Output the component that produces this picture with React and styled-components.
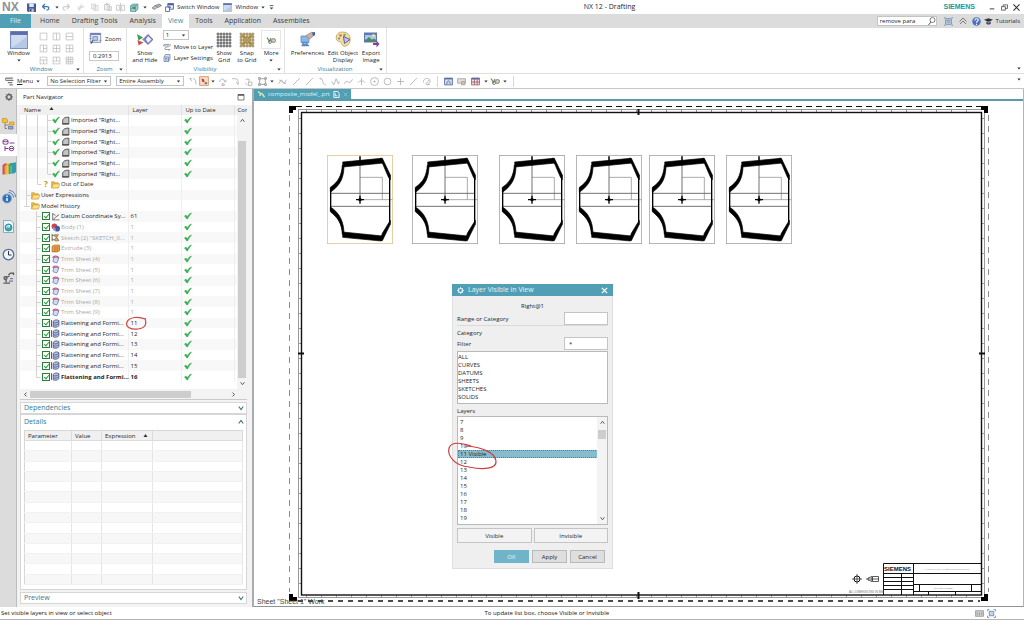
import styled, { createGlobalStyle } from "styled-components";

const GlobalStyle = createGlobalStyle`
  * {
    box-sizing: border-box;
  }
  body {
    margin: 0;
    background: #fff;
    font-family: "Open Sans", "Noto Sans", sans-serif;
    font-size: 6px;
    line-height: 8px;
    color: #262626;
  }
  button, input, select {
    font: inherit;
    color: inherit;
    margin: 0;
    padding: 0;
  }
  button {
    border: 0;
    background: transparent;
  }
  svg {
    display: block;
    flex: none;
  }
`;

const Page = styled.div`
  height: 100vh;
  display: flex;
  flex-direction: column;
  overflow: hidden;
`;

/* ---------- title bar ---------- */

const TitleBar = styled.header`
  height: 14px;
  display: grid;
  grid-template-columns: 57% auto 1fr;
  align-items: center;
`;

const QuickAccess = styled.div`
  display: flex;
  align-items: center;
`;

const Logo = styled.b`
  width: 25px;
  padding-left: 2px;
  font-family: "Liberation Sans", sans-serif;
  font-size: 12px;
  color: #8b9297;
`;

const Title = styled.span`
  font-size: 7px;
`;

const Slot = styled.button`
  width: ${(p) => p.$w || 13}px;
  display: flex;
  align-items: center;
  justify-content: center;
`;

const TextButton = styled.button`
  height: ${(p) => (p.$tall ? "17px" : "auto")};
  display: flex;
  align-items: center;
  gap: 3px;
  margin-right: ${(p) => p.$after || 0}px;
  white-space: nowrap;
`;

const WindowControls = styled.div`
  display: flex;
  align-items: center;
  justify-content: flex-end;
  padding-right: 2px;
`;

const Brand = styled.b`
  margin-right: 10px;
  font-family: "Liberation Sans", sans-serif;
  font-size: 7px;
  color: #159a96;
`;

/* ---------- ribbon tabs ---------- */

const TabBar = styled.nav`
  height: 14px;
  display: flex;
  background: #dcdcdc;
`;

const Tab = styled.button`
  padding: 0 6px;
  background: ${(p) => (p.$active ? "#fff" : "transparent")};
  color: ${(p) => (p.$active ? "#3c8ea5" : "#3a3a3a")};
  font-size: 7px;
`;

const FileTab = styled.button`
  width: 31px;
  margin-right: 3px;
  background: #519fb5;
  color: #d9f1f7;
  font-size: 7px;
`;

const TabTools = styled.div`
  margin-left: auto;
  padding-right: 4px;
  display: flex;
  align-items: center;
`;

const SearchBox = styled.label`
  width: 60px;
  height: 10px;
  margin-right: 5px;
  padding-left: 2px;
  display: flex;
  align-items: center;
  background: #fff;
  border: 1px solid #c4c4c4;

  input {
    flex: 1;
    min-width: 0;
    height: 8px;
    border: 0;
    outline: 0;
  }
`;

/* ---------- ribbon ---------- */

const Ribbon = styled.section`
  height: 46px;
  display: flex;
  border-bottom: 1px solid #dedede;
`;

const Group = styled.div`
  width: ${(p) => p.$w}px;
  display: flex;
  flex-direction: column;
  border-right: 1px solid #e2e2e2;
`;

const GroupBody = styled.div`
  height: 37px;
  display: flex;
  padding: 2px 0 0 ${(p) => p.$left || 0}px;
`;

const GroupLabel = styled.div`
  height: 8px;
  padding: 0 3px 0 6px;
  display: flex;
  align-items: center;
  color: #367d96;

  span {
    flex: 1;
    text-align: center;
  }
`;

const BigButton = styled.button`
  width: ${(p) => p.$w}px;
  display: flex;
  flex-direction: column;
  align-items: center;
  line-height: 7px;
  white-space: nowrap;

  > i {
    height: 19px;
    margin-bottom: 1px;
    display: flex;
    align-items: center;
    font-style: normal;
  }
  > svg {
    margin-top: 2px;
  }
`;

const MoreIcon = styled.i`
  width: 20px;
  justify-content: center;
  border: 1px solid #e6e6e6;
`;

const LayoutGrid = styled.div`
  height: 36px;
  display: grid;
  grid-template-columns: repeat(3, 13px);
  align-items: center;
  justify-items: center;
`;

const Column = styled.div`
  width: ${(p) => p.$w}px;
  display: flex;
  flex-direction: column;
  align-items: flex-start;
  gap: ${(p) => p.$gap}px;
`;

const ZoomInput = styled.input`
  width: 30px;
  height: 10px;
  padding: 0 3px;
  border: 1px solid #c9c9c9;
  outline: 0;
`;

const SelectBox = styled.div`
  width: ${(p) => p.$w}px;
  height: 10px;
  position: relative;
  background: #fff;
  border: 1px solid #c4c4c4;

  select {
    width: 100%;
    height: 8px;
    padding-left: 2px;
    display: block;
    appearance: none;
    border: 0;
    outline: 0;
    background: transparent;
    line-height: 8px;
  }
  svg {
    position: absolute;
    right: 2px;
    top: 3px;
    pointer-events: none;
  }
`;

const End = styled.div`
  margin-left: auto;
  padding: 0 3px 3px 0;
  display: flex;
  align-items: flex-end;
`;

const ToolStrip = styled.div`
  height: 15px;
  padding-left: 5px;
  display: flex;
  align-items: center;
  border-bottom: 1px solid #c6c6c6;
`;

const Divider = styled.span`
  width: 1px;
  height: 11px;
  margin: 0 4px;
  background: #d8d8d8;
`;

/* ---------- body ---------- */

const Body = styled.div`
  flex: 1;
  min-height: 0;
  display: flex;
`;

const Rail = styled.nav`
  width: 17px;
  background: #dcdcdc;
  border-right: 1px solid #bdbdbd;
`;

const RailButton = styled.button`
  width: 17px;
  height: ${(p) => p.$h}px;
  padding-bottom: ${(p) => p.$foot || 0}px;
  display: flex;
  align-items: center;
  justify-content: center;
  background: ${(p) => (p.$active ? "#fff" : "transparent")};
`;

const Navigator = styled.aside`
  width: 237px;
  display: flex;
  flex-direction: column;
  background: #f3f3f3;
  border-right: 2px solid #a9adaf;
`;

const NavTitle = styled.h2`
  height: 16px;
  margin: 0;
  padding: 0 7px 0 6px;
  display: flex;
  align-items: center;
  justify-content: space-between;
  background: #fff;
  font-size: 6px;
  font-weight: 400;
`;

const TreeArea = styled.div`
  position: relative;
  height: 284px;
  margin: 0 5px 0 3px;
  overflow: hidden;
  background: #fff;
`;

const Tree = styled.table`
  width: 100%;
  height: 277px;
  table-layout: fixed;
  border-collapse: collapse;

  th {
    height: 10px;
    padding: 0 0 0 4px;
    text-align: left;
    font-weight: 400;
    background: #f0f0f0;
    border-right: 1px solid #e2e2e2;
    overflow: hidden;
    white-space: nowrap;
  }
  th:last-child {
    padding-left: 3px;
    border: 0;
  }
  th svg {
    display: inline-block;
    margin: 0 0 2px 7px;
  }
  td {
    padding: 0 2px;
    border-right: 1px solid #efefef;
  }
  tbody tr:nth-child(even) {
    background: #f8f8f8;
  }
`;

const NodeCell = styled.div`
  height: 10px;
  padding-left: ${(p) => p.$indent}px;
  display: flex;
  align-items: center;
  gap: 1px;
  white-space: nowrap;
  color: ${(p) => (p.$dim ? "#a9a9a9" : "#262626")};
  font-weight: ${(p) => (p.$bold ? 700 : 400)};
`;

const LayerCell = styled.td`
  color: ${(p) => (p.$dim ? "#a9a9a9" : "#262626")};
  font-weight: ${(p) => (p.$bold ? 700 : 400)};
`;

const Question = styled.b`
  width: 8px;
  padding-left: 2px;
  font-size: 8px;
  color: #b09a28;
`;

const TickBox = styled.input`
  appearance: none;
  width: 8px;
  height: 8px;
  flex: none;
  position: relative;
  background: #fff;
  border: 1px solid #2f7d3d;

  &:checked::after {
    content: "";
    position: absolute;
    left: 2px;
    top: 0;
    width: 2px;
    height: 4px;
    border: solid #22a63a;
    border-width: 0 1px 1px 0;
    transform: rotate(40deg);
  }
`;

const TreeLines = styled.svg`
  position: absolute;
  left: 0;
  top: 10px;
  pointer-events: none;
`;

const VScroll = styled.div`
  position: absolute;
  right: 0;
  top: ${(p) => p.$top || 0}px;
  bottom: 0;
  width: 10px;
  padding: 3px 1px;
  display: flex;
  flex-direction: column;
  align-items: center;
  background: #f3f3f3;

  &::after {
    content: "";
    order: 1;
    width: 8px;
    height: ${(p) => p.$thumb}px;
    margin-top: ${(p) => p.$gap}px;
    background: #cdcdcd;
  }
  svg:last-of-type {
    order: 2;
    margin-top: auto;
  }
`;

const HScroll = styled.div`
  height: 11px;
  margin: 0 5px 0 3px;
  padding: 0 11px 0 3px;
  display: flex;
  align-items: center;
  gap: 2px;
  border-bottom: 1px solid #c9c9c9;

  i {
    width: 161px;
    height: 7px;
    margin-right: auto;
    background: #cdcdcd;
  }
`;

const Section = styled.section`
  margin: ${(p) => (p.$grow ? "0" : "2px")} 5px ${(p) => (p.$last ? "3px" : "0")} 3px;
  background: #fff;
  border: 1px solid #d6d6d6;
  ${(p) => p.$grow && "flex: 1; min-height: 0; display: flex; flex-direction: column;"}
`;

const SectionTitle = styled.button`
  width: 100%;
  height: ${(p) => p.$h || 10}px;
  padding: 0 2px 0 3px;
  display: flex;
  align-items: center;
  justify-content: space-between;
  color: #33788f;
  font-size: 7px;
`;

const Details = styled.table`
  flex: 1;
  margin: 1px 3px 4px;
  table-layout: fixed;
  border-collapse: collapse;
  border: 1px solid #d6d6d6;

  th {
    height: 10px;
    padding: 0 3px;
    text-align: left;
    font-weight: 400;
    background: #f0f0f0;
    border-right: 1px solid #dcdcdc;
    border-bottom: 1px solid #dcdcdc;
  }
  th svg {
    display: inline-block;
    margin: 0 0 1px 6px;
  }
  td {
    height: 10px;
    padding: 0;
    border-right: 1px solid #e6e6e6;
    border-bottom: 1px solid #f1f1f1;
  }
  tbody tr:nth-child(even) {
    background: #f7f7f7;
  }
`;

/* ---------- drawing ---------- */

const Workspace = styled.main`
  flex: 1;
  min-width: 0;
  position: relative;
  display: flex;
  flex-direction: column;
  border-right: 1px solid #b5b5b5;
  border-bottom: 1px solid #8f9496;
`;

const FileTabs = styled.div`
  height: 12px;
  display: flex;
  border-bottom: 2px solid #5b9aa9;
`;

const OpenFile = styled.button`
  width: 97px;
  padding: 0 3px;
  display: flex;
  align-items: center;
  gap: 3px;
  background: #519fb5;
  color: #dff3f8;
`;

const Sheet = styled.svg`
  flex: 1;
  width: 100%;
  min-height: 0;
`;

/* ---------- dialog ---------- */

const Dialog = styled.form`
  position: absolute;
  left: 198px;
  top: 195px;
  width: 161px;
  padding-bottom: 5px;
  background: #efefef;
  border: 1px solid #dedede;
`;

const DialogTitle = styled.header`
  height: 12px;
  margin: -1px -1px 0;
  padding: 0 5px;
  display: flex;
  align-items: center;
  gap: 4px;
  background: #519fb5;
  color: #e3f5fa;
  font-size: 7px;

  button {
    margin-left: auto;
  }
`;

const DialogBody = styled.div`
  padding: 6px 4px 0;
`;

const Subject = styled.p`
  margin: 0 0 2px;
  text-align: center;
`;

const Field = styled.label`
  height: 13px;
  display: flex;
  align-items: center;
  justify-content: space-between;

  input {
    width: 44px;
    height: 13px;
    padding: 0 4px;
    background: #fff;
    border: 1px solid #c4c4c4;
    outline: 0;
  }
`;

const Caption = styled.p`
  height: ${(p) => (p.$rule ? 12 : 11)}px;
  margin: 0;
  padding-top: 3px;
  border-top: ${(p) => (p.$rule ? "1px solid #dadada" : "0")};
`;

const ListBox = styled.ul`
  position: relative;
  height: ${(p) => p.$h}px;
  margin: 1px 0 0;
  padding: 1px 9px 0 0;
  overflow: hidden;
  list-style: none;
  background: #fff;
  border: 1px solid #b9b9b9;
`;

const Option = styled.li`
  height: 8px;
  padding-left: ${(p) => p.$pad}px;
  background: ${(p) => (p.$selected ? "#86bccb" : "transparent")};
  outline: ${(p) => (p.$selected ? "1px dotted #4f7f8d" : "0")};
  outline-offset: -1px;
`;

const ButtonPair = styled.div`
  margin-top: 3px;
  display: grid;
  grid-template-columns: 1fr 1fr;
  gap: 2px;

  button {
    height: 15px;
    background: #f3f3f3;
    border: 1px solid #c4c4c4;
  }
`;

const Footer = styled.footer`
  margin-top: 7px;
  padding-right: 3px;
  display: flex;
  justify-content: flex-end;
  gap: 3px;
`;

const FooterButton = styled.button`
  width: 35px;
  height: 13px;
  background: ${(p) => (p.$primary ? "#6fb4c8" : "#dedede")};
  border: 1px solid ${(p) => (p.$primary ? "#6fb4c8" : "#b9b9b9")};
  color: ${(p) => (p.$primary ? "#e3f5fa" : "#262626")};
`;

const Mark = styled.svg`
  position: absolute;
  left: ${(p) => p.$x}px;
  top: ${(p) => p.$y}px;
  overflow: visible;
  pointer-events: none;
`;

const StatusBar = styled.footer`
  height: 13px;
  padding: 0 28px 0 1px;
  display: grid;
  grid-template-columns: 5fr auto 4fr;
  align-items: center;
  border-bottom: 1px solid #b5b5b5;
  color: #111;

  div {
    display: flex;
    justify-content: flex-end;
    gap: 3px;
  }
`;

/* ---------- icons ---------- */

const Icon = ({ size = 9, w, h, box = "0 0 16 16", children, ...rest }) => (
  <svg width={w || size} height={h || size} viewBox={box} fill="none" stroke="#555" strokeWidth="1.5" aria-hidden="true" {...rest}>
    {children}
  </svg>
);

const Caret = ({ up, big }) => (
  <svg width={big ? 5 : 4} height="3" viewBox="0 0 4 3" aria-hidden="true">
    <path d={up ? "M0 3h4L2 0z" : "M0.3 0.5h3.4L2 2.6z"} fill="#333" />
  </svg>
);

const CHEVRONS = {
  down: "M2 4l6 8 6-8",
  up: "M2 12l6-8 6 8",
  left: "M11 2L5 8l6 6",
  right: "M5 2l6 6-6 6",
};

const Chevron = ({ dir = "down", color = "#3f6f80", size = 6 }) => (
  <Icon size={size} stroke={color} strokeWidth="3">
    <path d={CHEVRONS[dir]} />
  </Icon>
);

const SaveIcon = () => (
  <Icon stroke="none">
    <path d="M0 1h16v15H2L0 14z" fill="#4a5a94" />
    <path d="M4 1h8v6H4z" fill="#e6ecfa" />
    <path d="M4 10h8v6H4z" fill="#b9c3df" />
    <path d="M5 11h3v4H5z" fill="#38406b" />
  </Icon>
);

const UndoIcon = () => (
  <Icon size={8} stroke="#3f74b8" strokeWidth="2.5">
    <path d="M2 7h8c5 0 5 7-1 7M6 2L1 7l5 5" />
  </Icon>
);

const RedoIcon = () => (
  <Icon size={8} stroke="#cfcfcf" strokeWidth="2.5">
    <path d="M14 7H6c-5 0-5 7 1 7M10 2l5 5-5 5" />
  </Icon>
);

const CutIcon = () => (
  <Icon size={8} stroke="#c9c9c9">
    <path d="M1 8h14M9 2L6 12M4 10a2 2 0 100 4 2 2 0 000-4zM12 5l-4 4" />
  </Icon>
);

const CopyIcon = () => (
  <Icon size={8} stroke="#cfcfcf">
    <path d="M1 2h8v10H1zM6 5h8v10H6z" fill="#f3f3f3" />
  </Icon>
);

const PasteIcon = () => (
  <Icon size={8} stroke="#c4c4c4">
    <path d="M1 3h10v11H1zM4 1h4v3H4zM8 7h7v8H8z" fill="#f0f0f0" />
  </Icon>
);

const MirrorIcon = () => (
  <Icon size={9} stroke="#c4c4c4">
    <path d="M8 0v16M1 4h5v9H1zM10 4h5v9h-5z" />
  </Icon>
);

const RefreshIcon = () => (
  <Icon size={9} stroke="#4e9a86">
    <path d="M1 5l4-3h9v9l-4 4H1z" fill="#a9d3cd" />
    <path d="M1 5h9l4-3M10 5v10" />
    <path d="M3 11c0-4 5-4 5-1M8 7v3H5" stroke="#2b6b8f" />
  </Icon>
);

const EraserIcon = () => (
  <Icon w={11} h={8} box="0 0 22 16" stroke="#777">
    <path d="M2 10l6-5 5 3-5 5z" fill="#d8b9b9" />
    <path d="M9 5l7-3 5 3-7 4z" fill="#a8b3d8" />
  </Icon>
);

const SwitchIcon = () => (
  <Icon stroke="#4a5f9c">
    <path d="M5 1h10v10H5z" fill="#e4ecfa" />
    <path d="M5 2.5h10" strokeWidth="3" />
    <path d="M1 7h7v8H1z" fill="#fff" />
    <path d="M10 9c0-4-4-4-4 0" />
  </Icon>
);

const WindowIcon = ({ size = 9 }) => (
  <Icon size={size} stroke="#7c90c0" strokeWidth="1">
    <path d="M.5.5h15v15H.5z" fill="#cfdcf0" />
    <path d="M1 15L15 5v10z" fill="#b5c9e6" stroke="none" />
    <path d="M.5 2h15" stroke="#5b6dab" strokeWidth="3" />
  </Icon>
);

const LAYOUTS = [
  "", "M8 2v12", "M2 8h12",
  "M8 2v12M8 8h6", "M8 2v12M2 8h12", "M8 2v12M2 8h12",
  "M2 7h12M8 7v7", "M2 9h6M8 2v7h6", "M2 6h12M2 10h12M6 2v12M10 2v12",
];

const LayoutIcon = ({ lines }) => (
  <Icon size={9} stroke="#b9b9b9" strokeWidth="1.3">
    <path d={"M2 2h12v12H2z" + lines} />
  </Icon>
);

const ZoomIcon = () => (
  <Icon size={13} box="0 0 20 20" stroke="#6f7fae" strokeWidth="1.2">
    <path d="M2 2h16v14H2z" fill="#e5ebf7" />
    <path d="M2 3h16" strokeWidth="3" />
    <path d="M6 7h7v6H6z" fill="#b9caea" />
    <path d="M6 13l-3 5" stroke="#4c5a8a" strokeWidth="2" />
    <path d="M1 6h3M1 10h3M16 13h3" />
  </Icon>
);

const ShowHideIcon = () => (
  <Icon w={17} h={13} box="0 0 34 26" stroke="none">
    <path d="M2 2l12 7-9 6z" fill="#3fa24c" />
    <path d="M3 14l12 5-10 6z" fill="#cf5252" />
    <path d="M12 13l10-9v18z" fill="#8d93c9" />
    <path d="M24 4l9 9-9 9-6-9z" fill="#eef0fb" stroke="#6d74b5" strokeWidth="2.5" />
  </Icon>
);

const MoveLayerIcon = () => (
  <Icon size={8} stroke="#7b8790">
    <path d="M2 3h10l-3 3H1zM4 13h10l-3 3M14 2c2 4-1 5-6 6-4 1-5 3-4 5" />
  </Icon>
);

const LayerSettingsIcon = () => (
  <Icon size={8} stroke="#6a7fa8">
    <path d="M2 6l3-5h9v9l-3 5H2z" fill="#dbe6f4" />
    <path d="M2 6h9v9M4 9h5M4 12h5" />
  </Icon>
);

const GridIcon = ({ snap }) => (
  <Icon size={16} box="0 0 32 32" stroke={snap ? "#8a7c5a" : "#444"} strokeWidth="1.8">
    {snap && <path d="M3 3h26v26H3z" fill="#ecd98f" stroke="none" />}
    <path d="M4 1v30M10 1v30M16 1v30M22 1v30M28 1v30M1 4h30M1 10h30M1 16h30M1 22h30M1 28h30" />
    {snap && <path d="M6 6l8 8M26 6l-8 8M6 26l8-8M26 26l-8-8" stroke="#a8803a" strokeWidth="2.5" />}
  </Icon>
);

const GlassesIcon = () => (
  <Icon w={10} h={8} box="0 0 20 16" stroke="#667">
    <path d="M2 3l5 8 3-7" stroke="#6a8f53" strokeWidth="2.5" />
    <circle cx="8" cy="12" r="3" />
    <circle cx="15" cy="9" r="4" fill="#d8d2b5" />
  </Icon>
);

const PreferencesIcon = () => (
  <Icon w={17} h={17} box="0 0 34 34" stroke="#5a87bd">
    <path d="M4 10h16v13H4z" fill="#8db7e2" />
    <path d="M8 23h8v4H8zM5 29h15" strokeWidth="3" />
    <path d="M14 9l12-7 6 5-11 9z" fill="#c9b3a6" stroke="#a58474" />
    <path d="M26 3l6-1v6l-4 2z" fill="#4c5aa5" stroke="none" />
  </Icon>
);

const PaletteIcon = () => (
  <Icon w={17} h={17} box="0 0 34 34" stroke="#b99b4c">
    <path d="M15 2C4 2 1 11 3 17c2 5 7 3 9 6 2 5 4 9 10 7 8-2 9-12 8-18C28 5 22 2 15 2z" fill="#f0dfa0" />
    <circle cx="11" cy="9" r="2.5" fill="#d86b58" stroke="none" />
    <circle cx="19" cy="8" r="2.5" fill="#68a86b" stroke="none" />
    <circle cx="8" cy="15" r="2" fill="#5d7fc6" stroke="none" />
    <path d="M17 11l13 6-11 8z" fill="#c8c6ee" stroke="#5f55ad" strokeWidth="2" />
  </Icon>
);

const ExportIcon = () => (
  <Icon w={17} h={17} box="0 0 34 34" stroke="none">
    <path d="M2 3h26v20H2z" fill="#5f77b3" />
    <path d="M4 8h22v9H4z" fill="#a4c7ec" />
    <path d="M4 20l8-8 6 6 4-3 4 4v2H4z" fill="#4d8a57" />
    <circle cx="21" cy="9" r="3" fill="#f0e288" />
    <path d="M20 24h7v-5l6 7-6 7v-5h-7z" fill="#8a3f9c" />
  </Icon>
);

const MenuIcon = () => (
  <Icon size={9} stroke="#777">
    <path d="M1 2h13M3 6h12M5 10h8M8 14h6" strokeWidth="2" />
    <path d="M1 2v4h3" />
  </Icon>
);

const SNAPS = {
  hook: "M3 3l4 4M9 3c5 0 5 5 5 10M3 3h4",
  arc: "M2 9c3-7 9-7 11 0M13 9l-3-3M13 9l2-4M7 12h4v3H7z",
  sweep: "M2 3h6c4 0 5 4 5 10M9 9l4 5",
  pair: "M3 4h6v5M8 9h6v6H8zM2 10l5 5",
  chain: "M1 12l5-7 5 7 4-7M2 5l12 7",
  line: "M2 14L14 2",
  spline: "M3 2c8 0 3 12 11 12M3 2l3 3",
  wave: "M1 8l4 6 4-11 4 9 2-4",
  curve: "M1 12C5 0 9 18 15 4",
  perp: "M8 2v12M2 10c2-4 10-4 12 0",
  target: "M8 1a7 7 0 100 14A7 7 0 008 1zM8 6v4M6 8h4",
  circle: "M8 2a6 6 0 100 12A6 6 0 008 2z",
  plus: "M8 2v12M2 8h12",
  slash: "M2 14l9-9M11 5l3-3",
  face: "M3 10C1 4 9 0 13 4s0 9-5 9M6 13l7-8M8 14l6-1",
};

const SnapIcon = ({ name }) => (
  <Icon size={9} stroke="#b3b3b3" strokeWidth="1.6">
    <path d={SNAPS[name]} />
  </Icon>
);

const PointIcon = () => (
  <Icon size={10} stroke="#d9976b">
    <path d="M1 1h14v14H1z" fill="#f7dccb" />
    <path d="M4 4l4 1 1 5-4-1z" fill="#b34a42" stroke="none" />
    <path d="M9 10h4v3H9z" fill="#777" stroke="none" />
  </Icon>
);

const BoxIcon = () => (
  <Icon size={9} stroke="#777" strokeWidth="1.2">
    <path d="M3 3h10v10H3z" />
    <path d="M1 1h3v3H1zM12 1h3v3h-3zM1 12h3v3H1zM12 12h3v3h-3z" fill="#fff" />
  </Icon>
);

const DrawViewIcon = () => (
  <Icon size={9} stroke="#5a6a9c">
    <path d="M1 2h14v12H1z" fill="#cfdcf2" />
    <path d="M1 3h14" strokeWidth="2.5" />
    <path d="M5 13c0-8 6-8 6 0" />
  </Icon>
);

const NoteIcon = () => (
  <Icon size={9} stroke="#a5a5a5">
    <path d="M1 3h14v8H1z" fill="#dedede" />
    <path d="M8 8h6v6H8z" fill="#d4c493" />
  </Icon>
);

const TableIcon = () => (
  <Icon size={9} stroke="#9c5b6c">
    <path d="M1 2h14v12H1z" fill="#f4e4ea" />
    <path d="M1 3h14" stroke="#5c6ba5" strokeWidth="3" />
    <path d="M1 9h14M6 4v10M11 4v10" />
  </Icon>
);

const GearIcon = ({ color = "#555", size = 8 }) => (
  <Icon size={size} stroke={color} strokeWidth="2.6">
    <circle cx="8" cy="8" r="4.6" />
    <path d="M8 0v3M8 13v3M0 8h3M13 8h3M2.4 2.4l2 2M11.6 11.6l2 2M13.6 2.4l-2 2M4.4 11.6l-2 2" strokeWidth="1.8" />
  </Icon>
);

const AssemblyIcon = () => (
  <Icon size={13} box="0 0 26 26" stroke="#7a6f4c">
    <path d="M1 3h8l2 3v5H1zM15 10h9v6h-9z" fill="#f2c230" stroke="#c7962a" />
    <path d="M6 12v11h4M6 16h8" />
    <path d="M13 19h9v5h-9z" fill="#9aa6cf" stroke="#5f6ea5" />
  </Icon>
);

const PartNavIcon = () => (
  <Icon size={13} box="0 0 26 26" stroke="#7d3d86" strokeWidth="2">
    <path d="M2 3c2-2 8-2 10 0v6c-2 2-8 2-10 0zM2 4c2 2 8 2 10 0M15 8h10M6 14v10M6 19h7" />
    <circle cx="19" cy="19" r="4.5" />
    <path d="M16 19h6" />
  </Icon>
);

const BooksIcon = () => (
  <Icon size={14} box="0 0 28 28" stroke="none">
    <path d="M1 9l4-4h5v19l-4 3H1z" fill="#d8503c" />
    <path d="M7 9l4-4h5v19l-4 3H7z" fill="#e8b836" />
    <path d="M13 8l4-4h5v19l-4 3h-5z" fill="#3fa556" />
    <path d="M19 7l4-4h5v19l-4 3h-5z" fill="#2f9bb5" />
    <path d="M6 10v17M12 10v17M18 9v17" stroke="#fff" strokeWidth="0.8" />
  </Icon>
);

const InfoIcon = () => (
  <Icon size={14} box="0 0 28 28" stroke="#5878b8" strokeWidth="2">
    <circle cx="10" cy="17" r="9" fill="#2f6fb5" stroke="#7fa6d6" />
    <path d="M10 11v3M10 16v6" stroke="#fff" strokeWidth="3" />
    <path d="M13 5c6 0 10 5 10 10M14 1c8 0 13 6 13 13" />
  </Icon>
);

const GlobePageIcon = () => (
  <Icon size={13} box="0 0 26 26" stroke="#5f9fae">
    <path d="M3 1h15l5 5v19H3z" fill="#eaf6f8" />
    <circle cx="13" cy="15" r="7" fill="#3fa7b0" stroke="#2c7f9b" />
    <path d="M9 15c0-5 5-5 6-2M15 10v4h-4" stroke="#fff" strokeWidth="2" />
  </Icon>
);

const ClockIcon = () => (
  <Icon size={13} box="0 0 26 26" stroke="#56698f" strokeWidth="2.5">
    <circle cx="13" cy="13" r="10.5" fill="#eef4fb" />
    <path d="M13 6v8h6" stroke="#333" strokeWidth="2" />
  </Icon>
);

const RobotIcon = () => (
  <Icon size={13} box="0 0 26 26" stroke="#555" strokeWidth="2.5">
    <path d="M3 24h13M9 22l-3-8 9-4M13 8l4-4h6v4" />
    <circle cx="7" cy="14" r="3" fill="#d6a86c" />
    <path d="M16 15h6M14 20h8" stroke="#6f7fae" />
  </Icon>
);

const GreenCheck = () => (
  <Icon size={8} stroke="#2eae4a" strokeWidth="1">
    <path d="M1 8l3-2 2.5 4C8.5 6 11 3 15 2c-3 4-5.5 7-8 12H5.5C4.5 12 3 10 1 8z" fill="#2eae4a" />
  </Icon>
);

const Folder = () => (
  <Icon size={9} stroke="#c9962c" strokeWidth="1">
    <path d="M1 3h5l1 2h6v9H1z" fill="#e8b848" />
    <path d="M4 7h12l-3 7H1z" fill="#fbe08a" />
  </Icon>
);

const NODE_ICONS = {
  sheet: (
    <Icon size={9} stroke="#444">
      <path d="M3 14V7c2-4 5-5 11-5v12z" fill="#c3c3c3" />
      <path d="M2 14h12" strokeWidth="2" />
    </Icon>
  ),
  folder: <Folder />,
  datum: (
    <Icon stroke="#666">
      <path d="M3 2v12h12M3 14L13 5M3 3l5 3" />
      <path d="M10 8l4-3" stroke="#9b6b5b" />
    </Icon>
  ),
  body: (
    <Icon stroke="none">
      <circle cx="6" cy="6" r="5" fill="#cc4848" />
      <circle cx="11" cy="10" r="5" fill="#4458a8" />
      <path d="M3 7l5 2 1 6-5-2z" fill="#8d9ad2" />
    </Icon>
  ),
  sketch: (
    <Icon stroke="#555">
      <path d="M2 2v12M2 4h5M2 12h5M13 2l-3 6 4 6" />
      <path d="M7 3h4v4H7zM7 10h5v4H7z" fill="#e0c36b" stroke="#9c8438" />
    </Icon>
  ),
  extrude: (
    <Icon stroke="#b5702c">
      <path d="M2 4l4-2h9v10l-4 2H2z" fill="#eba04b" />
      <path d="M7 4v9M11 4v9" />
    </Icon>
  ),
  trim: (
    <Icon stroke="#6670b5">
      <path d="M5 5c3-2 6 0 9 0-2 3-1 6-4 9-3-1-5-1-7-3 2-2 1-4 2-6z" fill="#d6d9f2" />
      <path d="M3 5c2-4 8-4 11 0" stroke="#c85f6f" strokeWidth="2.5" />
    </Icon>
  ),
  flat: (
    <Icon stroke="#4d5a8c">
      <path d="M4 4c3-3 7-3 10-1v9c-3 3-7 3-10 2z" fill="#b7c2e2" />
      <path d="M4 6c3 2 7 1 10-2M4 10c3 2 7 1 10-2" />
      <path d="M1 2v12" stroke="#333" />
    </Icon>
  ),
};

/* ---------- data ---------- */

const range = (from, to) => Array.from({ length: to - from + 1 }, (_, i) => from + i);

const NODES = [
  ...range(1, 6).map(() => ({ name: 'Imported "Right...', icon: "sheet", kind: "import", ok: true })),
  { name: "Out of Date", icon: "folder", kind: "stale" },
  { name: "User Expressions", icon: "folder", kind: "root" },
  { name: "Model History", icon: "folder", kind: "root" },
  { name: "Datum Coordinate Sy...", icon: "datum", layer: 61, ok: true },
  { name: "Body (1)", icon: "body", layer: 1, dim: true, ok: true },
  { name: 'Sketch (2) "SKETCH_0...', icon: "sketch", layer: 1, dim: true, ok: true },
  { name: "Extrude (3)", icon: "extrude", layer: 1, dim: true, ok: true },
  ...range(4, 9).map((n) => ({ name: `Trim Sheet (${n})`, icon: "trim", layer: 1, dim: true, ok: true })),
  ...range(11, 16).map((n) => ({ name: "Flattening and Formi...", icon: "flat", layer: n, bold: n === 16, ok: true })),
];

const INDENT = { import: 30, stale: 20, root: 9, feature: 20 };

const CATEGORIES = ["ALL", "CURVES", "DATUMS", "SHEETS", "SKETCHES", "SOLIDS"];

const VIEWS = [327, 412, 499, 576, 649, 726];

/* ---------- parts ---------- */

const Select = ({ label, width, value }) => (
  <SelectBox $w={width}>
    <select aria-label={label} defaultValue={value}>
      <option>{value}</option>
    </select>
    <Caret big />
  </SelectBox>
);

function TopBar() {
  return (
    <TitleBar>
      <QuickAccess>
        <Logo>NX</Logo>
        <Slot aria-label="Save"><SaveIcon /></Slot>
        <Slot aria-label="Undo" $w={16}><UndoIcon /></Slot>
        <Slot aria-label="Undo list" $w={5}><Caret /></Slot>
        <Slot aria-label="Redo"><RedoIcon /></Slot>
        <Slot aria-label="Cut" $w={18}><CutIcon /></Slot>
        <Slot aria-label="Copy" $w={10}><CopyIcon /></Slot>
        <Slot aria-label="Paste" $w={15}><PasteIcon /></Slot>
        <Slot aria-label="Mirror" $w={10}><MirrorIcon /></Slot>
        <Slot aria-label="Refresh" $w={18}><RefreshIcon /></Slot>
        <Slot aria-label="Refresh list" $w={4}><Caret /></Slot>
        <Slot aria-label="Erase" $w={18}><EraserIcon /></Slot>
        <TextButton $after={4}><SwitchIcon />Switch Window</TextButton>
        <TextButton $after={4}><WindowIcon />Window<Caret /></TextButton>
        <Slot aria-label="Customize" $w={5}>
          <Icon size={5} box="0 0 8 8"><path d="M1 1h6" /><path d="M1 4h6L4 7z" fill="#444" stroke="none" /></Icon>
        </Slot>
      </QuickAccess>
      <Title>NX 12 - Drafting</Title>
      <WindowControls>
        <Brand>SIEMENS</Brand>
        <Slot aria-label="Minimize"><Icon size={6}><path d="M2 13h12" strokeWidth="3" /></Icon></Slot>
        <Slot aria-label="Restore"><Icon size={7}><path d="M1 6h9v8H1zM5 6V2h10v8h-5" strokeWidth="2" /></Icon></Slot>
        <Slot aria-label="Close" $w={11}><Icon size={7}><path d="M1 1l14 14M15 1L1 15" strokeWidth="2.5" stroke="#333" /></Icon></Slot>
      </WindowControls>
    </TitleBar>
  );
}

function Tabs() {
  return (
    <TabBar>
      <FileTab>File</FileTab>
      {["Home", "Drafting Tools", "Analysis", "View", "Tools", "Application", "Assemblies"].map((name) => (
        <Tab key={name} $active={name === "View"}>{name}</Tab>
      ))}
      <TabTools>
        <SearchBox>
          <input aria-label="Search commands" defaultValue="remove para" />
          <Icon size={8}><circle cx="9" cy="6" r="5" /><path d="M6 10l-5 6" strokeWidth="2" /></Icon>
        </SearchBox>
        <Slot aria-label="Full screen" $w={14}>
          <Icon size={9} stroke="#6a87a8"><path d="M3 3h10v10H3z" fill="#c5d6e6" /><path d="M0 3V0h3M13 0h3v3M16 13v3h-3M3 16H0v-3M5 6h6M5 9h6" /></Icon>
        </Slot>
        <Slot aria-label="Minimize ribbon" $w={14}><Icon size={8}><path d="M1 9l7-7 7 7M2 14l6-6 6 6" /></Icon></Slot>
        <Slot aria-label="Help" $w={14}>
          <Icon size={9} stroke="none"><circle cx="8" cy="8" r="7.5" fill="#4a70c0" /><path d="M5 6c0-4 7-4 6 0-1 2-3 2-3 4M8 12v2" stroke="#fff" strokeWidth="2" /></Icon>
        </Slot>
        <TextButton>
          <Icon size={9} stroke="none"><path d="M0 5l8-3 8 3-8 4z" fill="#333" /><path d="M4 8v4c3 2 6 2 8 0V8l-4 2z" fill="#444a70" /></Icon>
          Tutorials
        </TextButton>
      </TabTools>
    </TabBar>
  );
}

function RibbonBar() {
  return (
    <Ribbon>
      <Group $w={84}>
        <GroupBody>
          <BigButton $w={37}><i><WindowIcon size={18} /></i>Window<Caret /></BigButton>
          <LayoutGrid>{LAYOUTS.map((lines, i) => <LayoutIcon key={i} lines={lines} />)}</LayoutGrid>
        </GroupBody>
        <GroupLabel><span>Window</span><Caret /></GroupLabel>
      </Group>
      <Group $w={43}>
        <GroupBody $left={5}>
          <Column $gap={4}>
            <TextButton $tall><ZoomIcon />Zoom</TextButton>
            <ZoomInput aria-label="Zoom scale" defaultValue="0.2913" />
          </Column>
        </GroupBody>
        <GroupLabel><span>Zoom</span><Caret /></GroupLabel>
      </Group>
      <Group $w={158}>
        <GroupBody>
          <BigButton $w={36}><i><ShowHideIcon /></i>Show<br />and Hide</BigButton>
          <Column $w={50} $gap={3}>
            <Select label="Work layer" width={26} value="1" />
            <TextButton><MoveLayerIcon />Move to Layer</TextButton>
            <TextButton><LayerSettingsIcon />Layer Settings</TextButton>
          </Column>
          <BigButton $w={23}><i><GridIcon /></i>Show<br />Grid</BigButton>
          <BigButton $w={23}><i><GridIcon snap /></i>Snap<br />to Grid</BigButton>
          <BigButton $w={26}><MoreIcon><GlassesIcon /></MoreIcon>More<Caret /></BigButton>
        </GroupBody>
        <GroupLabel><span>Visibility</span><Caret /></GroupLabel>
      </Group>
      <Group $w={102}>
        <GroupBody $left={4}>
          <BigButton $w={37}><i><PreferencesIcon /></i>Preferences</BigButton>
          <BigButton $w={34}><i><PaletteIcon /></i>Edit Object<br />Display</BigButton>
          <BigButton $w={22}><i><ExportIcon /></i>Export<br />Image</BigButton>
        </GroupBody>
        <GroupLabel><span>Visualization</span><Caret /></GroupLabel>
      </Group>
      <End><Caret /></End>
    </Ribbon>
  );
}

function SelectionBar() {
  return (
    <ToolStrip>
      <TextButton $after={7}><MenuIcon /><span><u>M</u>enu</span><Caret /></TextButton>
      <Select label="Type filter" width={64} value="No Selection Filter" />
      <Slot as="span" $w={5} />
      <Select label="Selection scope" width={68} value="Entire Assembly" />
      <Slot as="span" $w={3} />
      <Slot $w={11} aria-label="Reset"><SnapIcon name="hook" /></Slot>
      <Slot $w={12} aria-label="Point"><PointIcon /></Slot>
      <Slot $w={6} aria-label="Point list"><Caret /></Slot>
      {["arc", "sweep", "pair"].map((n) => <Slot key={n} aria-label={n}><SnapIcon name={n} /></Slot>)}
      <Slot $w={14} aria-label="Box"><BoxIcon /></Slot>
      <Slot $w={6} aria-label="Box list"><Caret /></Slot>
      <Slot $w={15} aria-label="chain"><SnapIcon name="chain" /></Slot>
      {["line", "slash", "spline", "wave", "curve", "perp", "target", "circle", "plus", "slash", "face"].map((n, i) => (
        <Slot key={i} aria-label={n}><SnapIcon name={n} /></Slot>
      ))}
      <Divider />
      <Slot aria-label="View"><DrawViewIcon /></Slot>
      <Slot aria-label="Note"><NoteIcon /></Slot>
      <Slot $w={15} aria-label="Table"><TableIcon /></Slot>
      <Slot $w={5} aria-label="Table list"><Caret /></Slot>
      <Slot aria-label="Display"><GlassesIcon /></Slot>
      <Slot $w={8} aria-label="Display list"><Caret /></Slot>
      <Divider />
      <End><Caret /></End>
    </ToolStrip>
  );
}

function ResourceRail() {
  return (
    <Rail>
      <RailButton $h={23} $foot={8} aria-label="Settings"><GearIcon /></RailButton>
      <RailButton $h={22} aria-label="Assembly Navigator"><AssemblyIcon /></RailButton>
      <RailButton $h={22} $active aria-label="Part Navigator"><PartNavIcon /></RailButton>
      <RailButton $h={24} aria-label="Reuse Library"><BooksIcon /></RailButton>
      <RailButton $h={34} aria-label="Info"><InfoIcon /></RailButton>
      <RailButton $h={24} aria-label="Web Browser"><GlobePageIcon /></RailButton>
      <RailButton $h={32} aria-label="History"><ClockIcon /></RailButton>
      <RailButton $h={14} aria-label="Machine"><RobotIcon /></RailButton>
    </Rail>
  );
}

function TreeRow({ node }) {
  const { name, icon, kind = "feature", layer, dim, bold, ok } = node;
  return (
    <tr>
      <td>
        <NodeCell $indent={INDENT[kind]} $dim={dim} $bold={bold}>
          {kind === "import" && <GreenCheck />}
          {kind === "stale" && <Question>?</Question>}
          {kind === "feature" && <TickBox type="checkbox" defaultChecked aria-label={name} />}
          {NODE_ICONS[icon]}
          <span>{name}</span>
        </NodeCell>
      </td>
      <LayerCell $dim={dim} $bold={bold}>{layer}</LayerCell>
      <td>{ok && <GreenCheck />}</td>
      <td />
    </tr>
  );
}

function PartNavigator() {
  return (
    <Navigator>
      <NavTitle>
        Part Navigator
        <Icon size={8}><path d="M2 3h12v11H2z" /><path d="M2 4h12" strokeWidth="3" /></Icon>
      </NavTitle>
      <TreeArea>
        <Tree>
          <colgroup>
            <col width="108" />
            <col width="53" />
            <col width="53" />
            <col />
          </colgroup>
          <thead>
            <tr><th>Name <Caret up big /></th><th>Layer</th><th>Up to Date</th><th>Cor</th></tr>
          </thead>
          <tbody>{NODES.map((node, i) => <TreeRow key={i} node={node} />)}</tbody>
        </Tree>
        <TreeLines width="50" height="270" fill="none" stroke="#d2d2d2" aria-hidden="true">
          <path d="M6.5 0v91M17.5 0v69.5h4M27.5 0v59M6.5 80.5h4M4 91.5h6M16.5 96v166.5h4" />
          {range(0, 5).map((i) => <path key={i} d={`M27.5 ${5.5 + Math.round(i * 10.7)}h4`} />)}
          {range(9, 23).map((i) => <path key={i} d={`M16.5 ${5.5 + Math.round(i * 10.7)}h4`} />)}
        </TreeLines>
        <Mark $x={105} $y={212} width="24" height="16" fill="none" stroke="#d0453f" strokeWidth="1.2">
          <path d="M20 2C14-1 4 0 2 5s4 8 11 7 9-4 7-11" />
        </Mark>
        <VScroll $top={10} $thumb={237} $gap={18}>
          <Chevron dir="up" color="#555" size={5} />
          <Chevron dir="down" color="#555" size={5} />
        </VScroll>
      </TreeArea>
      <HScroll>
        <Chevron dir="left" color="#444" size={5} />
        <i />
        <Chevron dir="right" color="#444" size={5} />
      </HScroll>
      <Section><SectionTitle>Dependencies<Chevron /></SectionTitle></Section>
      <Section $grow>
        <SectionTitle $h={14}>Details<Chevron dir="up" /></SectionTitle>
        <Details>
          <colgroup>
            <col width="47" />
            <col width="30" />
            <col width="51" />
            <col />
          </colgroup>
          <thead>
            <tr><th>Parameter</th><th>Value</th><th>Expression <Caret up big /></th><th /></tr>
          </thead>
          <tbody>{range(1, 14).map((n) => <tr key={n}><td /><td /><td /><td /></tr>)}</tbody>
        </Details>
      </Section>
      <Section $last><SectionTitle>Preview<Chevron /></SectionTitle></Section>
    </Navigator>
  );
}

function DrawingView({ x, selected }) {
  return (
    <svg x={x} y="155" width="66" height="89" viewBox="0 0 198 267" fill="none" stroke="#000" strokeWidth="3">
      <rect x="1" y="1" width="196" height="265" stroke={selected ? "#e3c690" : "#a8a8a8"} />
      <path d="M99 67h67v67M99 134h97" stroke="#9a9a9a" strokeWidth="2.5" />
      <path d="M99 4v130M11 115h177M11 154h177" stroke="#555" strokeWidth="2.5" />
      <path d="M11 100v68M188 60v146" strokeWidth="4" />
      <g fill="#000" strokeWidth="2">
        <path d="M47 21L164 10l6 14-122 12z" />
        <path d="M160 10h6l24 50v14l-5-6-20-46z" />
        <path d="M46 30h5c0 38-10 60-41 82V97c24-16 34-36 36-67z" />
        <path d="M10 156c30 18 41 48 41 82h-5c-2-34-14-50-36-68z" />
        <path d="M47 231l120 12-4 15-116-11z" />
        <path d="M190 196v12l-24 49-6-2 6-20z" />
      </g>
      <path d="M99 4v14M99 122v24M87 134h24" stroke="#000" strokeWidth="4" />
      <circle cx="99" cy="134" r="5" fill="#000" stroke="none" />
    </svg>
  );
}

function DrawingSheet() {
  return (
    <Sheet viewBox="254 101 769 505" fill="none" stroke="#111">
      <path d="M296 106.5H982" strokeDasharray="6 4" />
      <path d="M289.5 115V592M988.5 115V592" stroke="#8d8d8d" strokeDasharray="6 5" />
      <path d="M298 601H980" strokeWidth="1.5" strokeDasharray="5 5" />
      <rect x="298.5" y="109.5" width="686" height="488" stroke="#999" />
      <path d="M306 111H980M306 596.5H980" strokeWidth="2" stroke="#999" strokeDasharray="1 14" />
      <path d="M300.5 118V592M983.5 118V592" strokeWidth="3" stroke="#999" strokeDasharray="1 14" />
      <rect x="301.5" y="112.5" width="680" height="482.5" strokeWidth="1.4" />
      <path d="M638.5 109v6M638.5 592v7M298 353.5h6M979 353.5h6" strokeWidth="2" />
      <path d="M289 106h7v4h-3v3h-4zM981 106h7v7h-4v-3h-3zM988 601h-7v-4h3v-3h4zM289 594h4v3h4v4h-8z" fill="#000" stroke="none" />

      {VIEWS.map((x, i) => <DrawingView key={x} x={x} selected={i === 0} />)}

      <circle cx="857" cy="579" r="3" />
      <path d="M852 579h10M857 574v10M866 579h13M868 578l4-1.5v5l-4-1.5zM872.5 576.5h6v5h-6z" stroke="#333" strokeWidth="0.8" />
      <path d="M883.5 563.5H982M883.5 563.5V595M913.5 563.5V595M883.5 573.5H982M901.5 573.5V595M883.5 577.5h30M883.5 581.5h30M883.5 585.5h30M883.5 589.5h30M913.5 584.5H982M919.5 584.5V592M971.5 584.5V592M913.5 591.5H982M928.5 592V595M955.5 592V595" />
      <g stroke="none" fontFamily="Liberation Sans, sans-serif">
        <text x="884" y="571" fontSize="6" fontWeight="700" fill="#111">SIEMENS</text>
        <text x="925" y="570" fontSize="2" fill="#999">THIS DRAWING HAS BEEN PRODUCED USING</text>
        <text x="849" y="593" fontSize="3" fill="#777">ALL DIMENSIONS IN MM</text>
        <text x="934" y="589" fontSize="2" fill="#888">DRAWING NUMBER</text>
        <text x="257" y="604" fill="#444" fontSize="7">Sheet "Sheet 1" Work</text>
      </g>
    </Sheet>
  );
}

function LayerDialog() {
  return (
    <Dialog role="dialog" aria-label="Layer Visible in View" onSubmit={(e) => e.preventDefault()}>
      <DialogTitle>
        <GearIcon color="#e3f5fa" size={7} />
        Layer Visible in View
        <button type="button" aria-label="Close"><Icon size={7} stroke="#fff" strokeWidth="3"><path d="M2 2l12 12M14 2L2 14" /></Icon></button>
      </DialogTitle>
      <DialogBody>
        <Subject>Right@1</Subject>
        <Field>Range or Category<input /></Field>
        <Caption $rule>Category</Caption>
        <Field>Filter<input defaultValue="*" /></Field>
        <ListBox $h={53} role="listbox" aria-label="Category">
          {CATEGORIES.map((c) => <Option key={c} role="option" $pad={0}>{c}</Option>)}
        </ListBox>
        <Caption>Layers</Caption>
        <ListBox $h={109} role="listbox" aria-label="Layers">
          {range(7, 20).map((n) => (
            <Option key={n} role="option" $pad={2} $selected={n === 11} aria-selected={n === 11}>
              {n === 11 ? "11 Visible" : n}
            </Option>
          ))}
          <VScroll as="li" role="presentation" $thumb={9} $gap={5}>
            <Chevron dir="up" color="#555" size={5} />
            <Chevron dir="down" color="#555" size={5} />
          </VScroll>
        </ListBox>
        <ButtonPair>
          <button type="button">Visible</button>
          <button type="button">Invisible</button>
        </ButtonPair>
        <Footer>
          <FooterButton $primary>OK</FooterButton>
          <FooterButton type="button">Apply</FooterButton>
          <FooterButton type="button">Cancel</FooterButton>
        </Footer>
      </DialogBody>
      <Mark $x={-6} $y={158} width="52" height="28" fill="none" stroke="#c9403f" strokeWidth="1.2">
        <path d="M24 3C12-1 4-1 2 5c-2 8 6 18 20 19 14 3 28 2 27-6C48 10 36 4 18 3" />
      </Mark>
    </Dialog>
  );
}

function App() {
  return (
    <>
      <GlobalStyle />
      <Page>
        <TopBar />
        <Tabs />
        <RibbonBar />
        <SelectionBar />
        <Body>
          <ResourceRail />
          <PartNavigator />
          <Workspace>
            <FileTabs>
              <OpenFile>
                <Icon size={8} stroke="#d9e8b8"><path d="M2 3l5 4M6 12c0-6 4-6 6-2l3 4" strokeWidth="3" /></Icon>
                composite_model_.prt
                <Icon size={7} stroke="#fff" strokeWidth="2"><path d="M2 1h9l3 4v10H2zM5 5v6h5" /></Icon>
                <Icon size={5} stroke="#a9d6e2" strokeWidth="2"><path d="M2 2l12 12M14 2L2 14" /></Icon>
              </OpenFile>
            </FileTabs>
            <DrawingSheet />
            <LayerDialog />
          </Workspace>
        </Body>
        <StatusBar>
          <span>Set visible layers in view or select object</span>
          <span>To update list box, choose Visible or Invisible</span>
          <div>
            <Icon size={9} stroke="#999"><path d="M1 3h14v10H1z" fill="#ccc" /><path d="M4 6v5M8 6v5M12 6v5" /></Icon>
            <Icon size={9} stroke="#6a87a8"><path d="M4 4h8v8H4z" fill="#c5d6e6" /><path d="M1 4V1h3M12 1h3v3M15 12v3h-3M4 15H1v-3" /></Icon>
          </div>
        </StatusBar>
      </Page>
    </>
  );
}

export default App;
